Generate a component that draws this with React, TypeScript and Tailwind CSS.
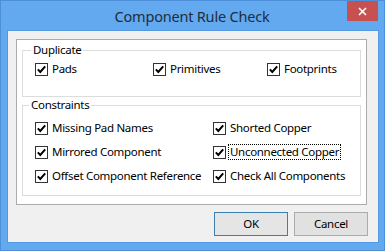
import React from "react";

const font = { fontFamily: '"Noto Sans", "Open Sans", Arial, sans-serif' };

function Check({ label, focused = false, w }: { label: string; focused?: boolean; w?: string }) {
  return (
    <div className={`flex items-center ${w ?? ""}`}>
      <div className="w-[13px] h-[13px] border border-[#333333] bg-white flex items-center justify-center shrink-0">
        <svg width="11" height="11" viewBox="0 0 11 11">
          <path d="M1.8 5.4 L4.3 8 L9.2 2.4" fill="none" stroke="#000" strokeWidth="2" />
        </svg>
      </div>
      <span
        className={`ml-[2px] px-[1px] leading-[14px] text-[11.5px] tracking-[-0.3px] text-black border whitespace-nowrap ${
          focused ? "border-dotted border-black" : "border-transparent"
        }`}
      >
        {label}
      </span>
    </div>
  );
}

export default function App() {
  return (
    <div style={font} className="w-[385px] h-[251px] bg-[#62a9f0] border border-[#4d8fd8] flex flex-col">
      <div className="h-[29px] relative flex items-center justify-center">
        <span className="text-[14.5px] tracking-[-0.2px] text-[#1f2d3d] leading-none mt-[1px] -ml-[1px]">
          Component Rule Check
        </span>
        <div className="absolute top-0 right-[6px] w-[31px] h-[20px] bg-[#c75050] flex items-center justify-center">
          <svg width="9" height="9" viewBox="0 0 9 9">
            <path d="M1 1 L8 8 M8 1 L1 8" stroke="#fff" strokeWidth="1.6" />
          </svg>
        </div>
      </div>
      <div className="ml-[6px] mr-[5px] h-[213px] border border-[#5398e0] bg-[#f0f0f0] flex flex-col">
        <div className="ml-[8px] mt-[8px] w-[351px] h-[166px] border border-[#acacac] bg-white px-[5px] pt-[2px] flex flex-col">
          <fieldset className="border border-[#dcdcdc]">
            <legend className="ml-[8px] px-[2px] text-[11.5px] tracking-[-0.3px] leading-[16px] text-black">
              Duplicate
            </legend>
            <div className="pl-[12px] h-[22px] flex items-center">
              <Check label="Pads" w="w-[118px]" />
              <Check label="Primitives" w="w-[114px]" />
              <Check label="Footprints" />
            </div>
            <div className="h-[16px]" />
          </fieldset>
          <fieldset className="border border-[#dcdcdc]">
            <legend className="ml-[6px] px-[2px] text-[11.5px] tracking-[-0.3px] leading-[16px] text-black">
              Constraints
            </legend>
            <div className="pl-[12px] pt-[3px] pb-[7px] flex flex-col">
              <div className="h-[24px] flex items-center">
                <Check label="Missing Pad Names" w="w-[178px]" />
                <Check label="Shorted Copper" />
              </div>
              <div className="h-[24px] flex items-center">
                <Check label="Mirrored Component" w="w-[178px]" />
                <Check label="Unconnected Copper" focused />
              </div>
              <div className="h-[24px] flex items-center">
                <Check label="Offset Component Reference" w="w-[178px]" />
                <Check label="Check All Components" />
              </div>
            </div>
          </fieldset>
        </div>
        <div className="mt-[7px] mr-[10px] flex justify-end gap-[6px]">
          <button className="w-[74px] h-[24px] border border-[#3c7fb1] bg-[#e5e5e5] text-[11.5px] tracking-[-0.3px] text-black flex items-center justify-center">
            OK
          </button>
          <button className="w-[74px] h-[24px] border border-[#acacac] bg-[#e1e1e1] text-[11.5px] tracking-[-0.3px] text-black flex items-center justify-center">
            Cancel
          </button>
        </div>
      </div>
    </div>
  );
}
